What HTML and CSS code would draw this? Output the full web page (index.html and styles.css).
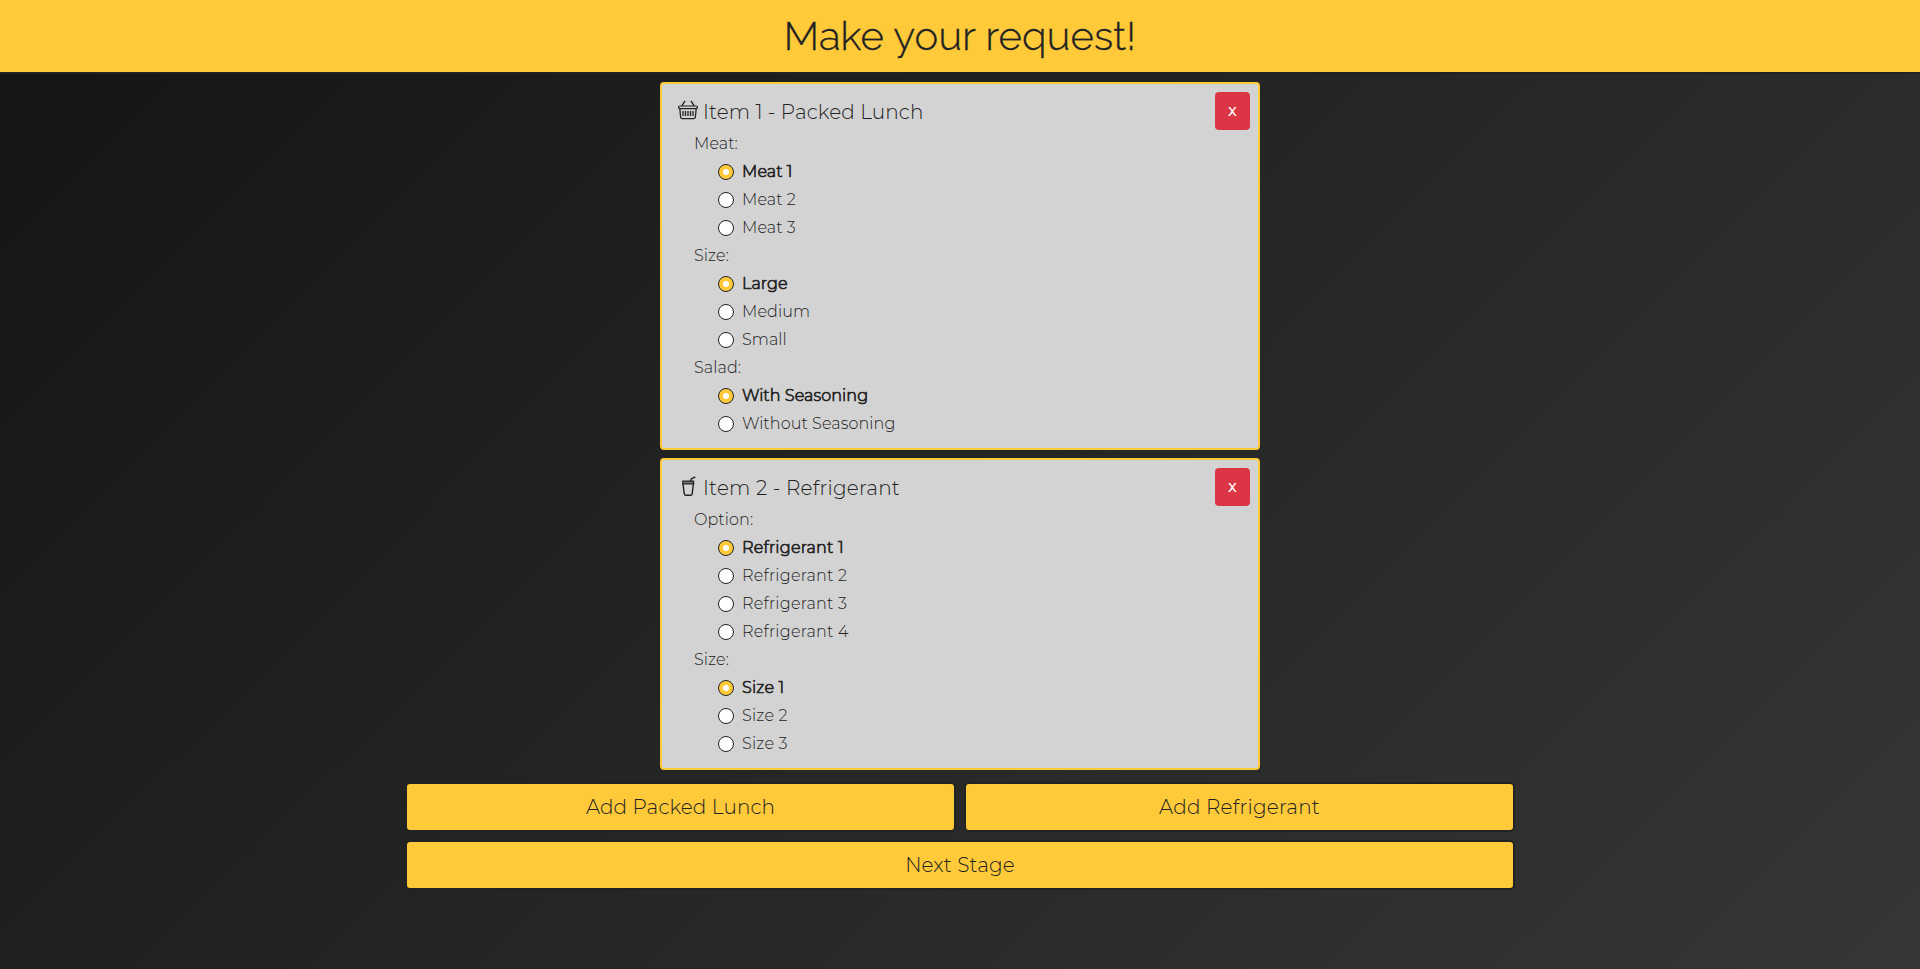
FILE: index.html
```html
<!DOCTYPE html>
<html lang="en">
<head>
<meta charset="utf-8">
<title>Make your request!</title>
<link rel="stylesheet" href="styles.css">
</head>
<body>
<header class="header"><h1 class="header-title">Make your request!</h1></header>
<main class="container">
  <section class="card">
    <button class="remove">x</button>
    <h2 class="card-title">
      <svg class="icon" viewBox="0 0 20 20"><path d="M3.800 6 7 .8M16.200 6 13 .8" stroke-width="1.400"/><rect x=".6" y="6" width="18.800" height="2.600" rx="1"/><path d="M1.800 8.600 2.600 17q.2 1.600 1.800 1.600h11.200q1.600 0 1.800-1.600l.8-8.400" stroke-width="1.300"/><path d="M5 11v5M7.500 11v5M10 11v5M12.500 11v5M15 11v5" stroke-width="1.300"/></svg>
      <span class="title-text">Item 1 - Packed Lunch</span>
    </h2>
    <div class="group">Meat:</div>
    <label class="option checked"><i class="radio"></i><span>Meat 1</span></label>
    <label class="option"><i class="radio"></i><span>Meat 2</span></label>
    <label class="option"><i class="radio"></i><span>Meat 3</span></label>
    <div class="group">Size:</div>
    <label class="option checked"><i class="radio"></i><span>Large</span></label>
    <label class="option"><i class="radio"></i><span>Medium</span></label>
    <label class="option"><i class="radio"></i><span>Small</span></label>
    <div class="group">Salad:</div>
    <label class="option checked"><i class="radio"></i><span>With Seasoning</span></label>
    <label class="option"><i class="radio"></i><span>Without Seasoning</span></label>
  </section>
  <section class="card drink">
    <button class="remove">x</button>
    <h2 class="card-title">
      <svg class="icon" viewBox="0 0 20 20"><path d="M12 6.500 13.400 2.700 17.300 1" stroke-width="1.400"/><path class="lid" d="M4.800 5.200h10.800v2.600H4.800z"/><path d="M5 7.600l1.200 10q.2 1.600 1.800 1.600h4.400q1.600 0 1.800-1.600l1.200-10" stroke-width="1.400"/></svg>
      <span class="title-text">Item 2 - Refrigerant</span>
    </h2>
    <div class="group">Option:</div>
    <label class="option checked"><i class="radio"></i><span>Refrigerant 1</span></label>
    <label class="option"><i class="radio"></i><span>Refrigerant 2</span></label>
    <label class="option"><i class="radio"></i><span>Refrigerant 3</span></label>
    <label class="option"><i class="radio"></i><span>Refrigerant 4</span></label>
    <div class="group">Size:</div>
    <label class="option checked"><i class="radio"></i><span>Size 1</span></label>
    <label class="option"><i class="radio"></i><span>Size 2</span></label>
    <label class="option"><i class="radio"></i><span>Size 3</span></label>
  </section>
  <div class="actions">
    <button class="action">Add Packed Lunch</button>
    <button class="action drink-action">Add Refrigerant</button>
    <button class="action wide">Next Stage</button>
  </div>
</main>
</body>
</html>
```
FILE: styles.css
```css
* { box-sizing: border-box; }
body {
  margin: 0;
  height: 969px;
  overflow: hidden;
  background: linear-gradient(135deg, #141414, #363636);
  color: #222;
  font: 300 16px/24px Montserrat, Inter, sans-serif;
  letter-spacing: 0.08px;
}
button { font: inherit; color: inherit; letter-spacing: inherit; margin: 0; }
.header {
  height: 74px;
  border-bottom: 2px solid #222;
  background: #ffca3a;
  display: flex;
  justify-content: center;
  align-items: center;
}
.header-title {
  margin: 0;
  font: 300 40px/48px Raleway, Lato, sans-serif;
  letter-spacing: 0.2px;
  -webkit-text-stroke: 0.3px #222;
}
.container {
  width: 1110px;
  margin: 0 auto;
  padding-top: 8px;
  display: flex;
  flex-direction: column;
  align-items: center;
}
.card {
  position: relative;
  width: 600px;
  margin-bottom: 8px;
  padding: 14px 16px 10px;
  border: 2px solid #ffca3a;
  border-radius: 4px;
  background: #d3d3d3;
}
.remove {
  position: absolute;
  top: 8px;
  right: 8px;
  width: 35px;
  height: 38px;
  padding: 0;
  border: 0;
  border-radius: 4px;
  background: #dc3545;
  color: #fff;
  font-weight: 500;
}
.card-title {
  display: flex;
  gap: 5px;
  height: 32px;
  margin: 0;
  font-weight: 300;
  font-size: 20px;
  line-height: 28px;
  letter-spacing: 0.12px;
}
.icon {
  width: 20px;
  height: 20px;
  margin-top: 2px;
  fill: none;
  stroke: #222;
  stroke-width: 1.2;
}
.lid { fill: #777; }
.group { height: 28px; padding-left: 16px; line-height: 27px; }
.option { display: flex; align-items: center; height: 28px; padding-left: 40px; gap: 8px; }
.option span { line-height: 28px; }
.drink .option span, .drink .title-text, .drink-action { letter-spacing: 0.22px; }
.radio {
  width: 16px;
  height: 16px;
  border: 1px solid #222;
  border-radius: 50%;
  background: #fff;
}
.checked { -webkit-text-stroke: 0.7px #222; }
.checked .radio { background: radial-gradient(circle, #fff 2.700px, #ffca3a 3.300px); }
.actions {
  display: grid;
  grid-template-columns: 1fr 1fr;
  gap: 8px;
  width: 100%;
  margin-top: 4px;
}
.action {
  height: 50px;
  padding: 0;
  border: 2px solid #222;
  border-radius: 5px;
  background: #ffca3a;
  font-size: 20px;
  letter-spacing: 0.12px;
}
.action.drink-action { letter-spacing: 0.22px; }
.wide { grid-column: span 2; }
```
